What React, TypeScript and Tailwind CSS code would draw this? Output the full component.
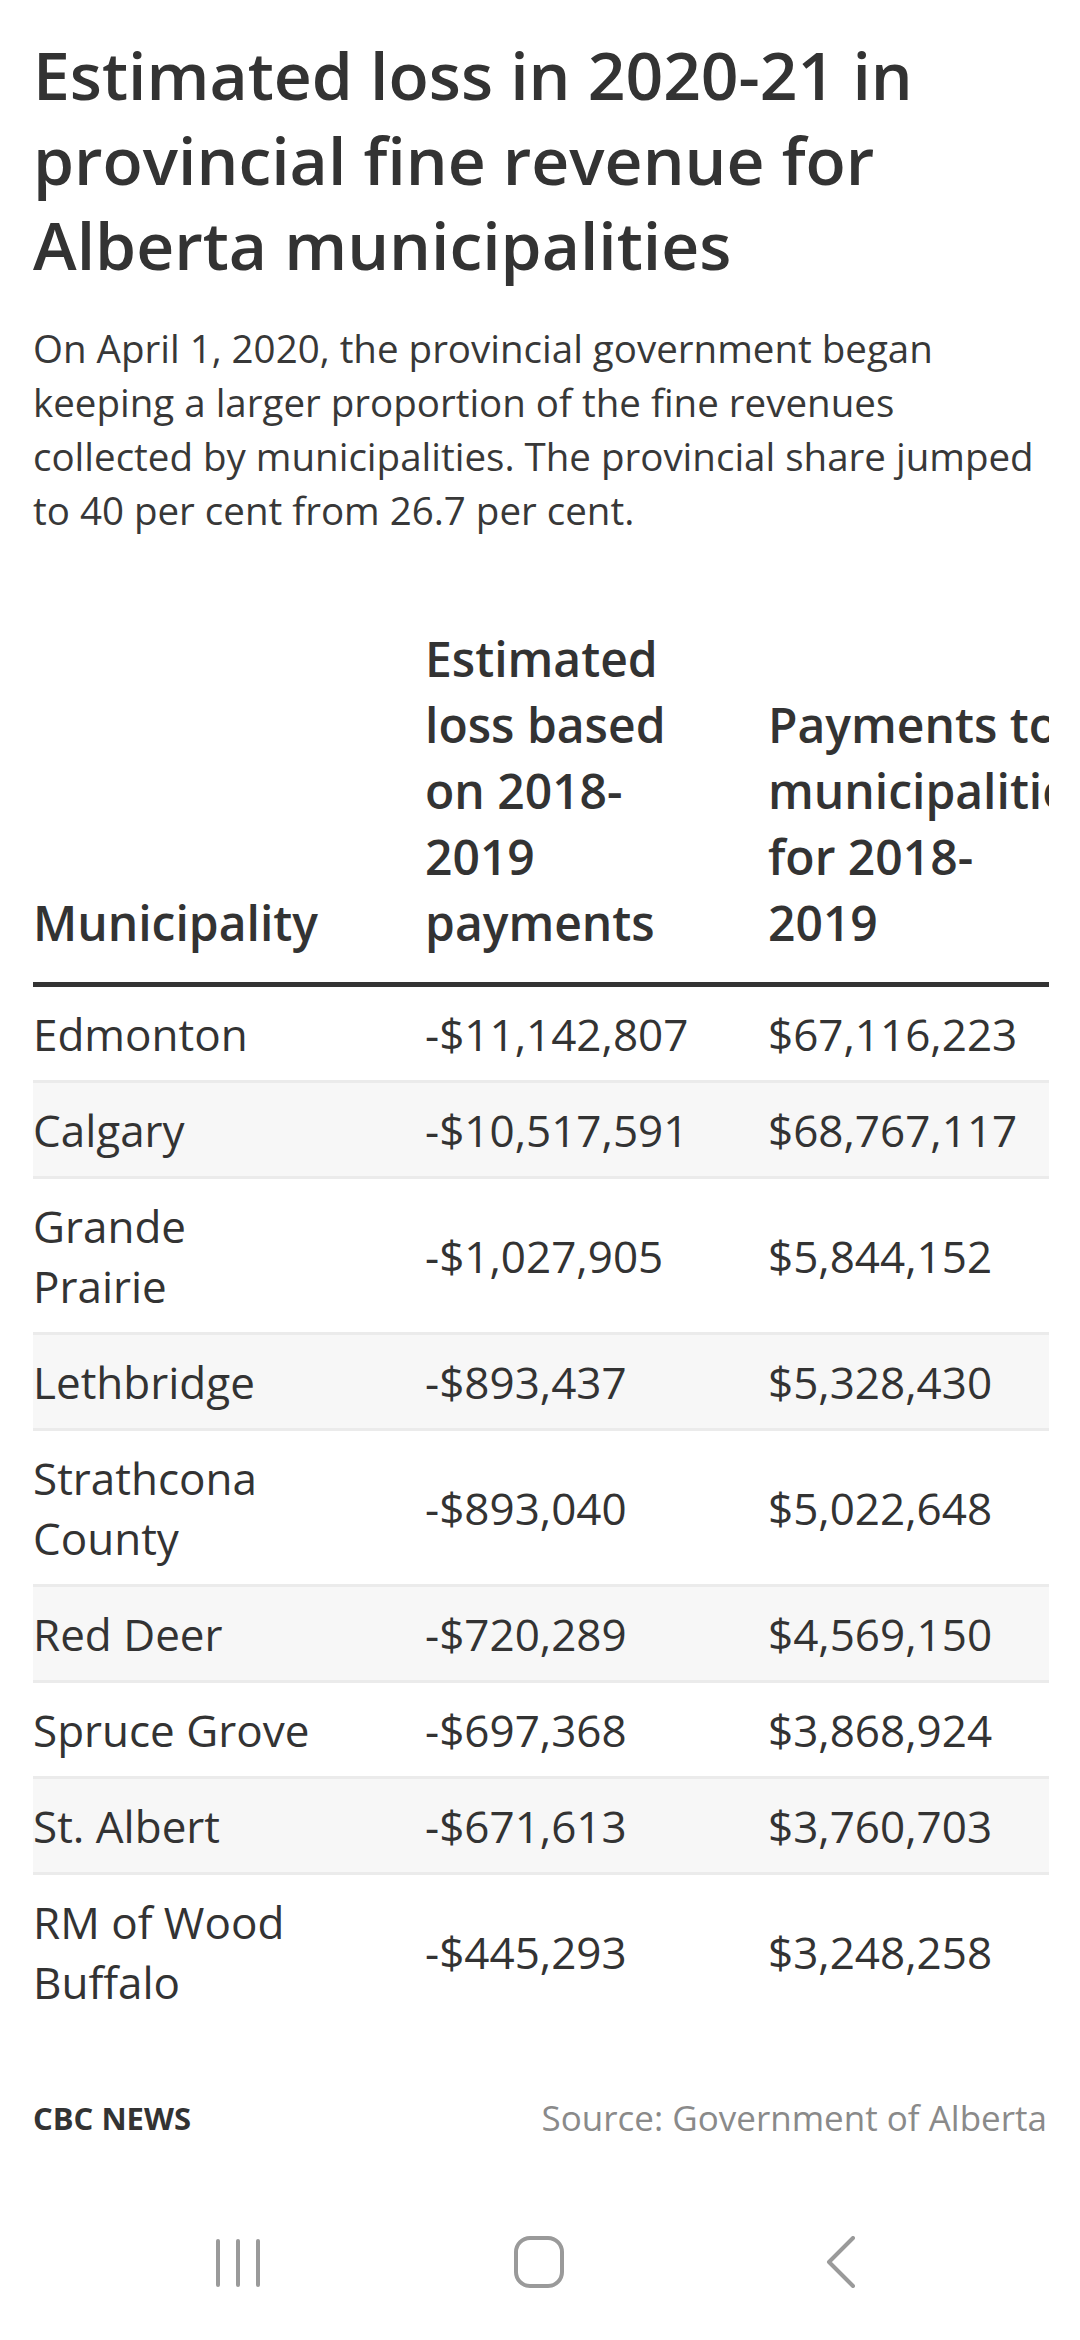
import React from "react"

const rows: [string, string, string][] = [
  ["Edmonton", "-$11,142,807", "$67,116,223"],
  ["Calgary", "-$10,517,591", "$68,767,117"],
  ["Grande Prairie", "-$1,027,905", "$5,844,152"],
  ["Lethbridge", "-$893,437", "$5,328,430"],
  ["Strathcona County", "-$893,040", "$5,022,648"],
  ["Red Deer", "-$720,289", "$4,569,150"],
  ["Spruce Grove", "-$697,368", "$3,868,924"],
  ["St. Albert", "-$671,613", "$3,760,703"],
  ["RM of Wood Buffalo", "-$445,293", "$3,248,258"],
]

// Android-style system navigation
const NavBar = () => (
  <div className="mt-auto h-[156px] flex items-center justify-center">
    <div className="relative w-full h-[52px]">
      <svg className="absolute left-[214px] top-[2px]" width="48" height="50" viewBox="0 0 48 50">
        <g stroke="#9a9a9a" strokeWidth="4" strokeLinecap="round">
          <line x1="4" y1="3" x2="4" y2="47" />
          <line x1="24" y1="3" x2="24" y2="47" />
          <line x1="44" y1="3" x2="44" y2="47" />
        </g>
      </svg>
      <svg className="absolute left-[514px] top-0" width="50" height="52" viewBox="0 0 50 52">
        <rect x="2" y="2" width="46" height="48" rx="14" fill="none" stroke="#9a9a9a" strokeWidth="4" />
      </svg>
      <svg className="absolute left-[826px] top-0" width="30" height="52" viewBox="0 0 30 52">
        <polyline points="27,2 3,26 27,50" fill="none" stroke="#9a9a9a" strokeWidth="4" strokeLinecap="round" strokeLinejoin="round" />
      </svg>
    </div>
  </div>
)

export default function App() {
  return (
    <div className="min-h-[2340px] w-[1080px] bg-white flex flex-col font-['Open_Sans',sans-serif] text-[#333]">
      <div className="px-[33px] pt-[32px]">
        <h1 className="text-[66px] leading-[85px] font-semibold">
          Estimated loss in 2020-21 in provincial fine revenue for Alberta municipalities
        </h1>
        <p className="mt-[34px] text-[38.5px] leading-[54px] text-[#383838]">
          On April 1, 2020, the provincial government began keeping a larger proportion of the fine revenues
          collected by municipalities. The provincial share jumped to 40 per cent from 26.7 per cent.
        </p>

        <div className="mt-[89px] w-[1016px] overflow-hidden">
          <table className="w-[1095px] table-fixed border-collapse text-left">
            <colgroup>
              <col className="w-[392px]" />
              <col className="w-[343px]" />
              <col className="w-[360px]" />
            </colgroup>
            <thead>
              <tr className="border-b-[5px] border-[#333]">
                <th className="align-bottom pb-[26px] pr-[102px] text-[48px] leading-[66px] font-semibold">Municipality</th>
                <th className="align-bottom pb-[26px] pr-[68px] text-[48px] leading-[66px] font-semibold">
                  Estimated loss based on 2018-2019 payments
                </th>
                <th className="align-bottom pb-[26px] pr-[60px] text-[48px] leading-[66px] font-semibold">
                  Payments to municipalities for 2018-2019
                </th>
              </tr>
            </thead>
            <tbody>
              {rows.map((r, i) => (
                <tr
                  key={r[0]}
                  className={
                    (i % 2 === 1 ? "bg-[#f7f7f7] " : "bg-white ") +
                    (i < rows.length - 1 ? "border-b-[3px] border-[#ebebeb]" : "")
                  }
                >
                  <td className="align-middle pt-[17px] pb-[16px] pr-[102px] text-[44px] leading-[60px]">{r[0]}</td>
                  <td className="align-middle pt-[17px] pb-[16px] pr-[68px] text-[44px] leading-[60px]">{r[1]}</td>
                  <td className="align-middle pt-[17px] pb-[16px] pr-[60px] text-[44px] leading-[60px]">{r[2]}</td>
                </tr>
              ))}
            </tbody>
          </table>
        </div>

        <div className="mt-[70px] flex items-center justify-between leading-[40px]">
          <span className="text-[31px] font-bold text-[#333]">CBC NEWS</span>
          <span className="text-[35px] text-[#8a8a8a]">Source: Government of Alberta</span>
        </div>
      </div>
      <NavBar />
    </div>
  )
}
